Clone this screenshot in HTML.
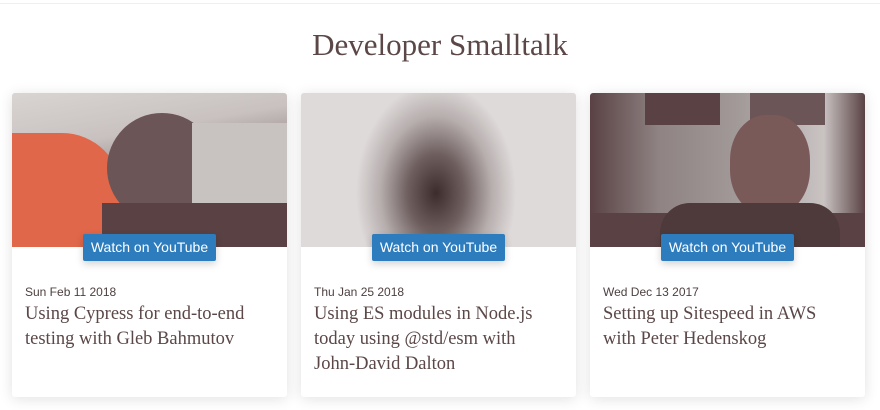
<!DOCTYPE html>
<html><head><style>
body{margin:0;width:880px;height:410px;background:#fff;position:relative;overflow:hidden;font-family:"Liberation Sans",sans-serif;}
.topline{position:absolute;top:3px;left:0;right:0;height:1px;background:#f0eeee;}
h1{position:absolute;top:27px;left:0;width:880px;text-align:center;margin:0;font:normal 31px "Liberation Serif",serif;color:#5b4747;}
.card{position:absolute;top:93px;width:275px;height:304px;background:#fff;border-radius:3px;box-shadow:0 2px 14px rgba(0,0,0,.12);}
.img{position:absolute;top:0;left:0;width:275px;height:154px;border-radius:3px 3px 0 0;overflow:hidden;}
.btn{position:absolute;top:141px;left:71px;width:133px;height:27px;background:#2d7cbd;color:#fff;font-size:14px;line-height:27px;text-align:center;border-radius:2px;box-shadow:0 3px 8px rgba(0,0,0,.18);}
.date{position:absolute;top:192px;left:13px;font-size:12px;color:#4e4040;}
.title{position:absolute;top:209px;left:13px;width:238px;font:18.5px/25px "Liberation Serif",serif;color:#5b4747;}
</style></head><body>
<div class="topline"></div>
<h1>Developer Smalltalk</h1>

<div class="card" style="left:12px">
 <div class="img" style="background:linear-gradient(170deg,#d9d5d3 0%,#c8c1bf 30%,#8f8282 55%,#5c4646 100%)">
  <div style="position:absolute;left:0;top:40px;width:110px;height:114px;background:#e0674a;border-radius:0 60px 40px 0"></div>
  <div style="position:absolute;left:95px;top:20px;width:110px;height:110px;background:#6b5556;border-radius:50%"></div>
  <div style="position:absolute;left:180px;top:30px;width:95px;height:110px;background:#c8c2c0"></div>
  <div style="position:absolute;left:90px;top:110px;width:185px;height:44px;background:#5a4244"></div>
 </div>
 <div class="btn">Watch on YouTube</div>
 <div class="date">Sun Feb 11 2018</div>
 <div class="title">Using Cypress for end-to-end testing with Gleb Bahmutov</div>
</div>

<div class="card" style="left:301px">
 <div class="img" style="background:radial-gradient(ellipse 80px 110px at 135px 100px,#3d2c2c 0%,#6e5e5e 35%,#b7aeae 70%,#dedad9 100%)"></div>
 <div class="btn">Watch on YouTube</div>
 <div class="date">Thu Jan 25 2018</div>
 <div class="title">Using ES modules in Node.js today using @std/esm with John-David Dalton</div>
</div>

<div class="card" style="left:590px">
 <div class="img" style="background:linear-gradient(90deg,#5a4244 0%,#8f8383 25%,#a39a9a 55%,#c9c3c2 85%,#5a4244 100%)">
  <div style="position:absolute;left:55px;top:0;width:75px;height:32px;background:#5a4244"></div>
  <div style="position:absolute;left:160px;top:0;width:75px;height:32px;background:#6b5556"></div>
  <div style="position:absolute;left:140px;top:22px;width:80px;height:100px;background:#7a5a58;border-radius:45%"></div>
  <div style="position:absolute;left:0;top:120px;width:275px;height:34px;background:#5a4244"></div>
  <div style="position:absolute;left:70px;top:110px;width:180px;height:44px;background:#4e3a3b;border-radius:30px 30px 0 0"></div>
 </div>
 <div class="btn">Watch on YouTube</div>
 <div class="date">Wed Dec 13 2017</div>
 <div class="title">Setting up Sitespeed in AWS with Peter Hedenskog</div>
</div>
</body></html>
